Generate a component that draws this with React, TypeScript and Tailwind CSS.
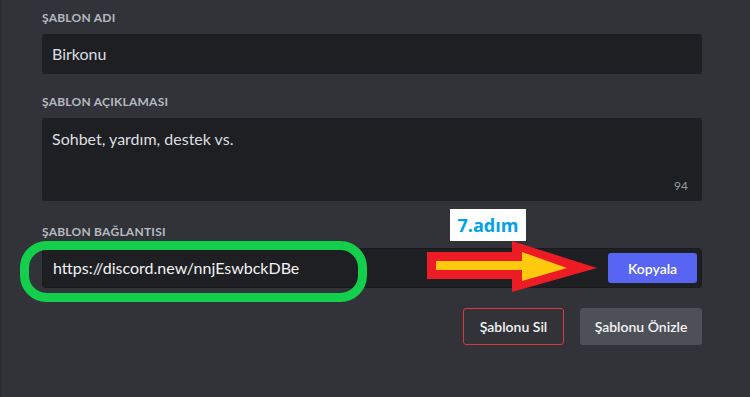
import React from "react";

function Label({ children }: { children: React.ReactNode }) {
  return (
    <div className="text-[12px] leading-[16px] font-bold uppercase tracking-[0.02em] text-[#b5bac1] mb-[8px]">
      {children}
    </div>
  );
}

export default function App() {
  return (
    <div className="relative w-[750px] h-[397px] bg-[#313338] flex overflow-hidden font-['Lato',sans-serif]">
      <div className="w-[2px] bg-[#2b2d31]" />
      <div className="flex-1 pl-[40px] pr-[48px] pt-[10px]">
        <Label>Şablon Adı</Label>
        <div className="h-[40px] rounded-[3px] bg-[#1e1f22] px-[10px] flex items-center text-[16px] text-[#dbdee1]">
          Birkonu
        </div>

        <div className="mt-[20px]">
          <Label>Şablon Açıklaması</Label>
        </div>
        <div className="h-[83px] rounded-[3px] bg-[#1e1f22] pl-[10px] pr-[14px] pt-[11px] pb-[8px] flex flex-col justify-between">
          <div className="text-[16px] leading-[20px] text-[#dbdee1]">Sohbet, yardım, destek vs.</div>
          <div className="self-end text-[12px] leading-[14px] text-[#949ba4]">94</div>
        </div>

        <div className="mt-[23px]">
          <Label>Şablon Bağlantısı</Label>
        </div>
        <div className="h-[40px] rounded-[3px] bg-[#1e1f22] border border-[#1a1b1e] pl-[10px] pr-[4px] flex items-center justify-between">
          <span className="text-[16px] text-[#f2f3f5]">https://discord.new/nnjEswbckDBe</span>
          <button className="h-[30px] w-[89px] rounded-[3px] bg-[#5865f2] text-[14px] font-semibold text-white">
            Kopyala
          </button>
        </div>

        <div className="mt-[20px] flex justify-end gap-[16px]">
          <button className="h-[37px] w-[101px] rounded-[3px] border border-[#da373c] text-[14px] font-semibold text-[#f2f3f5]">
            Şablonu Sil
          </button>
          <button className="h-[37px] w-[122px] rounded-[3px] bg-[#4e5058] text-[14px] font-semibold text-[#f2f3f5]">
            Şablonu Önizle
          </button>
        </div>
      </div>

      <svg className="absolute inset-0 pointer-events-none" width="750" height="397" viewBox="0 0 750 397">
        <rect x="24.5" y="245.5" width="338" height="52" rx="22" ry="22" fill="none" stroke="#13cf4b" strokeWidth="9" />
        <polygon points="427,252 512,252 512,241 597,268 512,292 512,279 427,279" fill="#ed1c24" />
        <polygon points="436,261 522,261 522,252 567,268 522,281 522,270 436,270" fill="#ffc90e" />
      </svg>

      <div className="absolute left-[450px] top-[209px] w-[76px] h-[32px] bg-white flex items-center justify-center">
        <span className="text-[18px] font-bold text-[#00a2e8] font-['Open_Sans',sans-serif]">7.adım</span>
      </div>
    </div>
  );
}
